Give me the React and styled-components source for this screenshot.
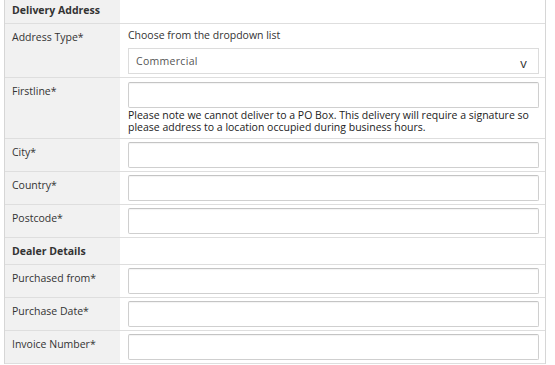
import React from "react";
import styled, { createGlobalStyle } from "styled-components";

const Global = createGlobalStyle`
  html, body { margin: 0; padding: 0; background: #fff; }
  body { font-family: "Open Sans", "Noto Sans", sans-serif; color: #333; overflow: hidden; }
`;

const Table = styled.div`
  margin: -3px 0 0 4px;
  width: 540px;
  border-left: 1px solid #d6d6d6;
  border-right: 1px solid #d6d6d6;
  font-size: 10.5px;
  line-height: 12px;
`;

const Row = styled.div`
  display: flex;
  box-sizing: border-box;
  border-bottom: 1px solid #dedede;
  min-height: ${(p) => p.$h}px;
`;

const Label = styled.div`
  width: 115px;
  flex: none;
  box-sizing: border-box;
  background: #f1f1f1;
  padding: 7px 7px 0;
  font-weight: ${(p) => (p.$head ? 700 : 400)};
`;

const Value = styled.div`
  flex: 1;
  display: flex;
  flex-direction: column;
  padding: ${(p) => (p.$top ? p.$top : 3)}px 6px 3px 8px;
`;

const Hint = styled.div`
  padding: 2px 0 7px;
`;

const Input = styled.div`
  height: 26px;
  flex: none;
  box-sizing: border-box;
  border: 1px solid #cfcfcf;
  border-top-color: #c4c4c4;
  border-radius: 2px;
  box-shadow: inset 0 1px 1px rgba(0, 0, 0, 0.05);
  background: #fff;
`;

const Select = styled.div`
  height: 26px;
  box-sizing: border-box;
  border: 1px solid #dcdcdc;
  display: flex;
  align-items: center;
  justify-content: space-between;
  padding: 0 11px 0 7px;
  color: #555;
  letter-spacing: 0.3px;
`;

const Chevron = styled.span`
  font-size: 13px;
  color: #333;
  padding-top: 3px;
`;

const Note = styled.div`
  padding-top: 1px;
  line-height: 12px;
  color: #222;
`;

const Field = ({ label }) => (
  <Row $h={33}>
    <Label>{label}</Label>
    <Value>
      <Input />
    </Value>
  </Row>
);

export default function App() {
  return (
    <>
      <Global />
      <Table>
        <Row $h={27}>
          <Label $head>Delivery Address</Label>
        </Row>
        <Row $h={54}>
          <Label>Address Type*</Label>
          <Value>
            <Hint>Choose from the dropdown list</Hint>
            <Select>
              <span>Commercial</span>
              <Chevron>v</Chevron>
            </Select>
          </Value>
        </Row>
        <Row $h={61}>
          <Label>Firstline*</Label>
          <Value $top={4}>
            <Input />
            <Note>
              Please note we cannot deliver to a PO Box. This delivery will require a signature so
              please address to a location occupied during business hours.
            </Note>
          </Value>
        </Row>
        <Field label="City*" />
        <Field label="Country*" />
        <Field label="Postcode*" />
        <Row $h={27}>
          <Label $head>Dealer Details</Label>
        </Row>
        <Field label="Purchased from*" />
        <Field label="Purchase Date*" />
        <Field label="Invoice Number*" />
      </Table>
    </>
  );
}
